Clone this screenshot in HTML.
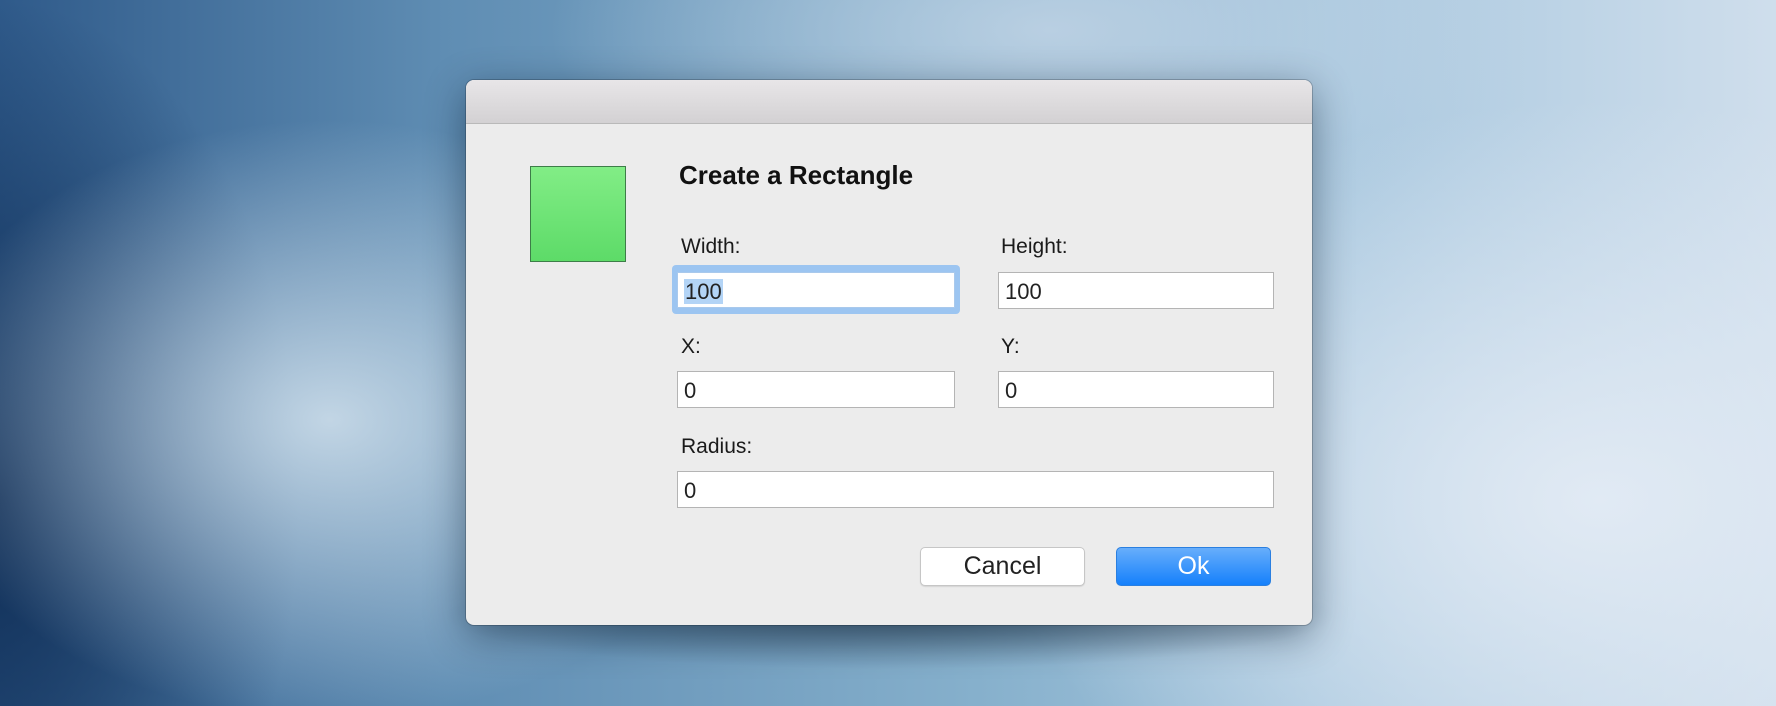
<!DOCTYPE html>
<html><head><style>
html,body{margin:0;padding:0}
body{width:1776px;height:706px;overflow:hidden;position:relative;font-family:"Liberation Sans",sans-serif;
background:
radial-gradient(ellipse 420px 300px at 330px 420px, rgba(200,218,232,0.95), rgba(200,218,232,0) 100%),
radial-gradient(ellipse 500px 200px at 1050px 30px, rgba(190,210,228,0.9), rgba(190,210,228,0) 100%),
radial-gradient(ellipse 600px 400px at 1600px 500px, rgba(225,234,244,1), rgba(225,234,244,0) 100%),
radial-gradient(ellipse 300px 500px at 0px 500px, rgba(15,45,85,1), rgba(15,45,85,0) 100%),
linear-gradient(90deg,#2f5a8a 0%,#5f8db3 25%,#86b0cc 55%,#a9c8df 75%,#cfdeec 100%);}
.shadow{position:absolute;left:440px;top:560px;width:900px;height:110px;background:radial-gradient(ellipse at center, rgba(40,60,80,0.55), rgba(40,60,80,0) 70%);}
.dlg{position:absolute;left:466px;top:80px;width:846px;height:545px;background:#ececec;border-radius:8px;overflow:hidden;box-shadow:0 10px 40px rgba(0,20,40,0.45),0 0 0 1px rgba(0,0,0,0.2)}
.tb{height:43px;background:linear-gradient(#e8e6e8,#d3d1d3);border-bottom:1px solid #b9b9b9}
.abs{position:absolute}
.sq{left:64px;top:86px;width:96px;height:96px;border:1.5px solid #3d7d48;background:linear-gradient(#82ed86,#5ddb68);box-sizing:border-box}
.title{left:213px;top:80px;font-size:26px;font-weight:bold;color:#111}
.lbl{font-size:21px;color:#1a1a1a}
.in{background:#fff;border:1px solid #b4b4b4;box-sizing:border-box;height:37px;font-size:22px;color:#222;padding-left:6px;line-height:37px}
.ring{border-radius:4px;background:#9cc5f1}
.btn{height:39px;box-sizing:border-box;border-radius:5px;font-size:25px;text-align:center;line-height:37px}
</style></head><body>
<div class="shadow"></div>
<div class="dlg">
<div class="tb"></div>
<div class="abs sq"></div>
<div class="abs title">Create a Rectangle</div>
<div class="abs lbl" style="left:215px;top:155px">Width:</div>
<div class="abs lbl" style="left:535px;top:155px">Height:</div>
<div class="abs ring" style="left:206px;top:185px;width:288px;height:49px"></div>
<div class="abs in" style="left:211px;top:192px;width:278px;height:36px;border-color:#a9c9ec"><span style="background:#b3d4f6;padding:0 1px">100</span></div>
<div class="abs in" style="left:532px;top:192px;width:276px">100</div>
<div class="abs lbl" style="left:215px;top:255px">X:</div>
<div class="abs lbl" style="left:535px;top:255px">Y:</div>
<div class="abs in" style="left:211px;top:291px;width:278px">0</div>
<div class="abs in" style="left:532px;top:291px;width:276px">0</div>
<div class="abs lbl" style="left:215px;top:355px">Radius:</div>
<div class="abs in" style="left:211px;top:391px;width:597px">0</div>
<div class="abs btn" style="left:454px;top:467px;width:165px;background:#fff;border:1px solid #c6c6c6;color:#222;box-shadow:0 1px 1px rgba(0,0,0,0.1)">Cancel</div>
<div class="abs btn" style="left:650px;top:467px;width:155px;background:linear-gradient(#67aefb,#1580fb);border:1px solid #2a7fe0;color:#fff">Ok</div>
</div>
</body></html>
